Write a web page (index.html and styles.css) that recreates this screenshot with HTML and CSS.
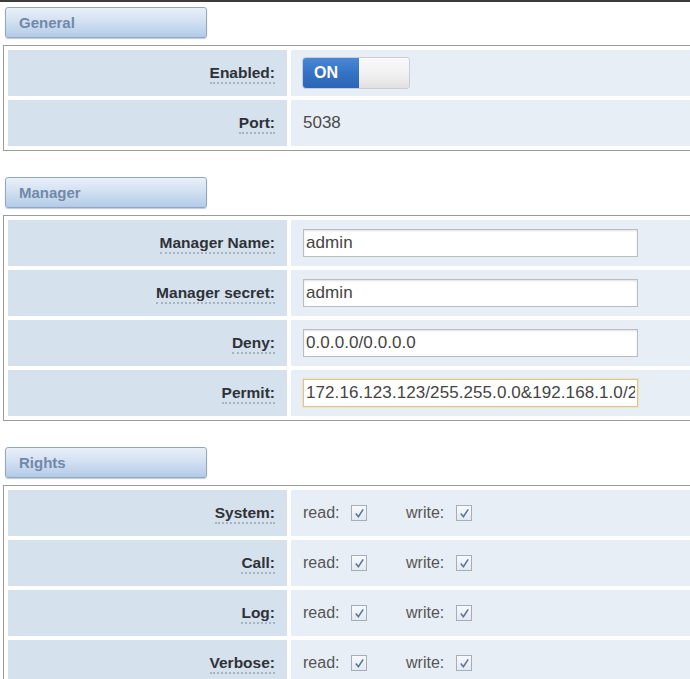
FILE: index.html
```html
<!DOCTYPE html>
<html>
<head>
<meta charset="utf-8">
<link rel="stylesheet" href="styles.css">
</head>
<body>
<div class="topline"></div>

<section class="section">
  <div class="tab">General</div>
  <table class="grid">
    <tr>
      <th class="label"><span class="abbr">Enabled:</span></th>
      <td class="value">
        <div class="toggle"><span class="on">ON</span><span class="off"></span></div>
      </td>
    </tr>
    <tr>
      <th class="label"><span class="abbr">Port:</span></th>
      <td class="value"><span class="plain">5038</span></td>
    </tr>
  </table>
</section>

<section class="section">
  <div class="tab">Manager</div>
  <table class="grid">
    <tr>
      <th class="label"><span class="abbr">Manager Name:</span></th>
      <td class="value"><input class="field" type="text" value="admin"></td>
    </tr>
    <tr>
      <th class="label"><span class="abbr">Manager secret:</span></th>
      <td class="value"><input class="field" type="text" value="admin"></td>
    </tr>
    <tr>
      <th class="label"><span class="abbr">Deny:</span></th>
      <td class="value"><input class="field" type="text" value="0.0.0.0/0.0.0.0"></td>
    </tr>
    <tr>
      <th class="label"><span class="abbr">Permit:</span></th>
      <td class="value"><input class="field field-focus" type="text" value="172.16.123.123/255.255.0.0&amp;192.168.1.0/24"></td>
    </tr>
  </table>
</section>

<section class="section">
  <div class="tab">Rights</div>
  <table class="grid">
    <tr>
      <th class="label"><span class="abbr">System:</span></th>
      <td class="value">
        <div class="rights">
          <span class="perm">read: <span class="cb"><svg viewBox="0 0 14 14" width="13" height="13"><path d="M3 7 L5.8 10.5 L11 2.5" fill="none" stroke="#5a7398" stroke-width="1.7"/></svg></span></span>
          <span class="perm">write: <span class="cb"><svg viewBox="0 0 14 14" width="13" height="13"><path d="M3 7 L5.8 10.5 L11 2.5" fill="none" stroke="#5a7398" stroke-width="1.7"/></svg></span></span>
        </div>
      </td>
    </tr>
    <tr>
      <th class="label"><span class="abbr">Call:</span></th>
      <td class="value">
        <div class="rights">
          <span class="perm">read: <span class="cb"><svg viewBox="0 0 14 14" width="13" height="13"><path d="M3 7 L5.8 10.5 L11 2.5" fill="none" stroke="#5a7398" stroke-width="1.7"/></svg></span></span>
          <span class="perm">write: <span class="cb"><svg viewBox="0 0 14 14" width="13" height="13"><path d="M3 7 L5.8 10.5 L11 2.5" fill="none" stroke="#5a7398" stroke-width="1.7"/></svg></span></span>
        </div>
      </td>
    </tr>
    <tr>
      <th class="label"><span class="abbr">Log:</span></th>
      <td class="value">
        <div class="rights">
          <span class="perm">read: <span class="cb"><svg viewBox="0 0 14 14" width="13" height="13"><path d="M3 7 L5.8 10.5 L11 2.5" fill="none" stroke="#5a7398" stroke-width="1.7"/></svg></span></span>
          <span class="perm">write: <span class="cb"><svg viewBox="0 0 14 14" width="13" height="13"><path d="M3 7 L5.8 10.5 L11 2.5" fill="none" stroke="#5a7398" stroke-width="1.7"/></svg></span></span>
        </div>
      </td>
    </tr>
    <tr>
      <th class="label"><span class="abbr">Verbose:</span></th>
      <td class="value">
        <div class="rights">
          <span class="perm">read: <span class="cb"><svg viewBox="0 0 14 14" width="13" height="13"><path d="M3 7 L5.8 10.5 L11 2.5" fill="none" stroke="#5a7398" stroke-width="1.7"/></svg></span></span>
          <span class="perm">write: <span class="cb"><svg viewBox="0 0 14 14" width="13" height="13"><path d="M3 7 L5.8 10.5 L11 2.5" fill="none" stroke="#5a7398" stroke-width="1.7"/></svg></span></span>
        </div>
      </td>
    </tr>
  </table>
</section>
</body>
</html>
```

FILE: styles.css
```css
html, body {
  margin: 0;
  padding: 0;
  background: #ffffff;
  font-family: "Liberation Sans", Arial, sans-serif;
  color: #3a3a3a;
  overflow: hidden;
}

.topline {
  height: 2px;
  background: #3c3c3c;
}

.section {
  padding-left: 3px;
  margin-bottom: 26px;
}

.section:first-of-type {
  margin-top: 5px;
}

.tab {
  box-sizing: border-box;
  margin-left: 2px;
  width: 202px;
  height: 31px;
  border: 1px solid #93a6bf;
  border-radius: 3px;
  background: linear-gradient(to bottom, #e9f0f9 0%, #d3e1f2 45%, #b3cbe8 100%);
  box-shadow: 0 1px 1px rgba(80, 100, 130, 0.35);
  color: #7189a9;
  font-weight: bold;
  font-size: 15px;
  line-height: 29px;
  padding-left: 13px;
  margin-bottom: 7px;
}

.grid {
  width: 692px;
  border: 1px solid #9c9c9c;
  border-spacing: 4px;
  background: #ffffff;
}

.grid td, .grid th {
  height: 46px;
  padding: 0;
}

.label {
  width: 279px;
  background: #d5e1ec;
  text-align: right;
  padding-right: 12px !important;
  box-sizing: border-box;
  font-weight: bold;
  font-size: 15.5px;
  color: #2e3238;
  vertical-align: middle;
}

.abbr {
  border-bottom: 2px dotted #a6b3c2;
  padding-bottom: 1px;
}

.value {
  background: #e8eef6;
  padding-left: 12px !important;
  vertical-align: middle;
  font-size: 16px;
  color: #4a4a4a;
}

.plain {
  font-size: 17px;
  color: #4a4a4a;
}

.toggle {
  display: flex;
  width: 106px;
  height: 30px;
  border-radius: 3px;
  overflow: hidden;
  box-shadow: 0 0 0 1px #c9ced6;
}

.toggle .on {
  width: 56px;
  background: linear-gradient(to bottom, #4a88d6 0%, #3472c4 50%, #2c66b6 100%);
  color: #ffffff;
  font-weight: bold;
  font-size: 16px;
  line-height: 30px;
  padding-left: 11px;
  box-sizing: border-box;
}

.toggle .off {
  flex: 1;
  background: linear-gradient(to bottom, #fafafa 0%, #efefef 60%, #e0e0e0 100%);
}

.field {
  display: block;
  box-sizing: border-box;
  width: 335px;
  height: 28px;
  border: 1px solid #b9bec6;
  box-shadow: inset 0 1px 2px rgba(0, 0, 0, 0.12);
  background: #ffffff;
  font-family: "Liberation Sans", Arial, sans-serif;
  font-size: 17px;
  letter-spacing: 0.08px;
  color: #444444;
  padding: 0 2px;
  outline: none;
}

.field-focus {
  border-color: #d8c596;
  box-shadow: 0 0 1px 1px #efe4c6;
}

.rights {
  display: flex;
  align-items: center;
}

.perm {
  display: inline-flex;
  align-items: center;
  gap: 12px;
  width: 103px;
  font-size: 16px;
  color: #555555;
}

.cb {
  display: inline-flex;
  align-items: center;
  justify-content: center;
  box-sizing: border-box;
  width: 16px;
  height: 16px;
  border: 1px solid #a3adbb;
  background: linear-gradient(to bottom, #f7f9fc, #e4e9f0);
}
```
